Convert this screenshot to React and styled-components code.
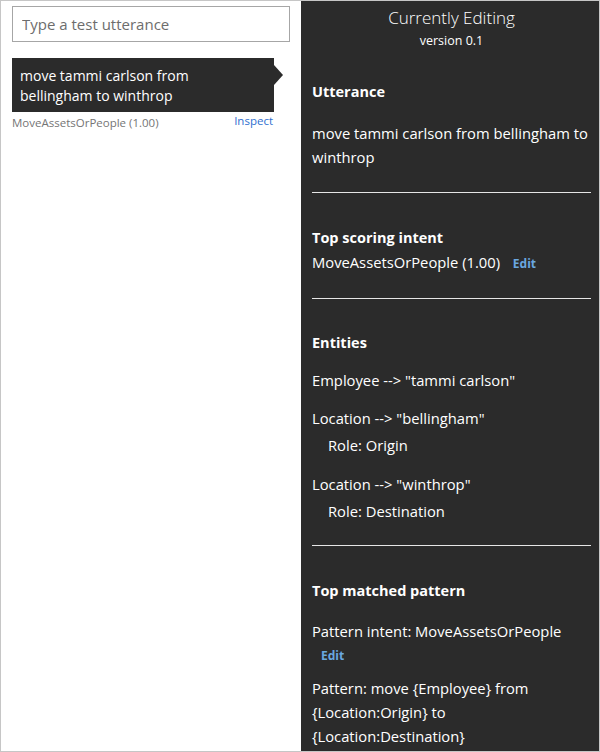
import React from "react";
import styled, { createGlobalStyle } from "styled-components";

const Global = createGlobalStyle`
  html, body { margin: 0; padding: 0; background: #ffffff; }
  body { font-family: "Segoe UI", "Open Sans", "Noto Sans", sans-serif; }
  * { box-sizing: border-box; }
`;

const Frame = styled.div`
  width: 600px;
  height: 752px;
  border: 1px solid #c6c6c6;
  display: grid;
  grid-template-columns: 300px 1fr;
  overflow: hidden;
`;

const LeftPane = styled.div`
  background: #ffffff;
  padding: 5px 9px 0 11px;
  display: flex;
  flex-direction: column;
`;

const TestInput = styled.input`
  width: 278px;
  height: 36px;
  border: 1px solid #a6a6a6;
  padding: 0 9px;
  font-family: inherit;
  font-size: 15px;
  color: #333;
  outline: none;
  &::placeholder { color: #6d6d6d; }
`;

const Bubble = styled.div`
  position: relative;
  margin-top: 16px;
  width: 262px;
  background: #2b2b2b;
  color: #ffffff;
  font-size: 14px;
  line-height: 20px;
  padding: 8px 30px 6px 8px;
  &::after {
    content: "";
    position: absolute;
    left: 100%;
    top: 7px;
    border-left: 9px solid #2b2b2b;
    border-top: 10px solid transparent;
    border-bottom: 10px solid transparent;
  }
`;

const MetaRow = styled.div`
  width: 261px;
  display: flex;
  justify-content: space-between;
  align-items: baseline;
  margin-top: 3px;
`;

const IntentScore = styled.span`
  font-size: 11.5px;
  color: #757575;
`;

const InspectLink = styled.a`
  font-size: 11.5px;
  color: #2f6fcf;
  text-decoration: none;
  position: relative;
  top: -2px;
  cursor: pointer;
`;

const RightPane = styled.div`
  background: #2b2b2b;
  color: #ffffff;
  padding: 5px 8px 0 11px;
  overflow: hidden;
`;

const Header = styled.div`
  text-align: center;
`;

const Title = styled.div`
  font-size: 17px;
  font-weight: 300;
  line-height: 24px;
`;

const Version = styled.div`
  font-size: 12.5px;
  line-height: 18px;
  margin-top: 2px;
`;

const Section = styled.section`
  padding-top: ${(p) => p.$top}px;
  padding-bottom: ${(p) => p.$bottom}px;
  border-bottom: ${(p) => (p.$last ? "none" : "1px solid #e6e6e6")};
`;

const SectionTitle = styled.div`
  font-size: 14.5px;
  font-weight: 700;
  line-height: 24px;
  margin-bottom: ${(p) => p.$gap}px;
`;

const Line = styled.div`
  font-size: 14.75px;
  line-height: 24px;
  margin-top: ${(p) => p.$top || 0}px;
  padding-left: ${(p) => p.$indent || 0}px;
`;

const EditLink = styled.a`
  display: inline-block;
  padding: 0 8px 0 9px;
  font-size: 12px;
  font-weight: 700;
  color: #6aa7e0;
  line-height: 20px;
  cursor: pointer;
`;

const BlockEdit = styled(EditLink)`
  display: block;
  margin-top: 3px;
`;

export default function App() {
  return (
    <>
      <Global />
      <Frame>
        <LeftPane>
          <TestInput placeholder="Type a test utterance" />
          <Bubble>move tammi carlson from bellingham to winthrop</Bubble>
          <MetaRow>
            <IntentScore>MoveAssetsOrPeople (1.00)</IntentScore>
            <InspectLink>Inspect</InspectLink>
          </MetaRow>
        </LeftPane>
        <RightPane>
          <Header>
            <Title>Currently Editing</Title>
            <Version>version 0.1</Version>
          </Header>
          <Section $top={30} $bottom={23}>
            <SectionTitle $gap={17}>Utterance</SectionTitle>
            <Line>move tammi carlson from bellingham to winthrop</Line>
          </Section>
          <Section $top={33} $bottom={24}>
            <SectionTitle $gap={0}>Top scoring intent</SectionTitle>
            <Line>
              MoveAssetsOrPeople (1.00) <EditLink>Edit</EditLink>
            </Line>
          </Section>
          <Section $top={32} $bottom={22}>
            <SectionTitle $gap={13}>Entities</SectionTitle>
            <Line>Employee --&gt; "tammi carlson"</Line>
            <Line $top={14}>Location --&gt; "bellingham"</Line>
            <Line $top={3} $indent={16}>Role: Origin</Line>
            <Line $top={15}>Location --&gt; "winthrop"</Line>
            <Line $top={3} $indent={16}>Role: Destination</Line>
          </Section>
          <Section $top={33} $bottom={0} $last>
            <SectionTitle $gap={16}>Top matched pattern</SectionTitle>
            <Line>Pattern intent: MoveAssetsOrPeople</Line>
            <BlockEdit>Edit</BlockEdit>
            <Line $top={10}>
              Pattern: move {"{Employee}"} from {"{Location:Origin}"} to{" "}
              {"{Location:Destination}"}
            </Line>
          </Section>
        </RightPane>
      </Frame>
    </>
  );
}
